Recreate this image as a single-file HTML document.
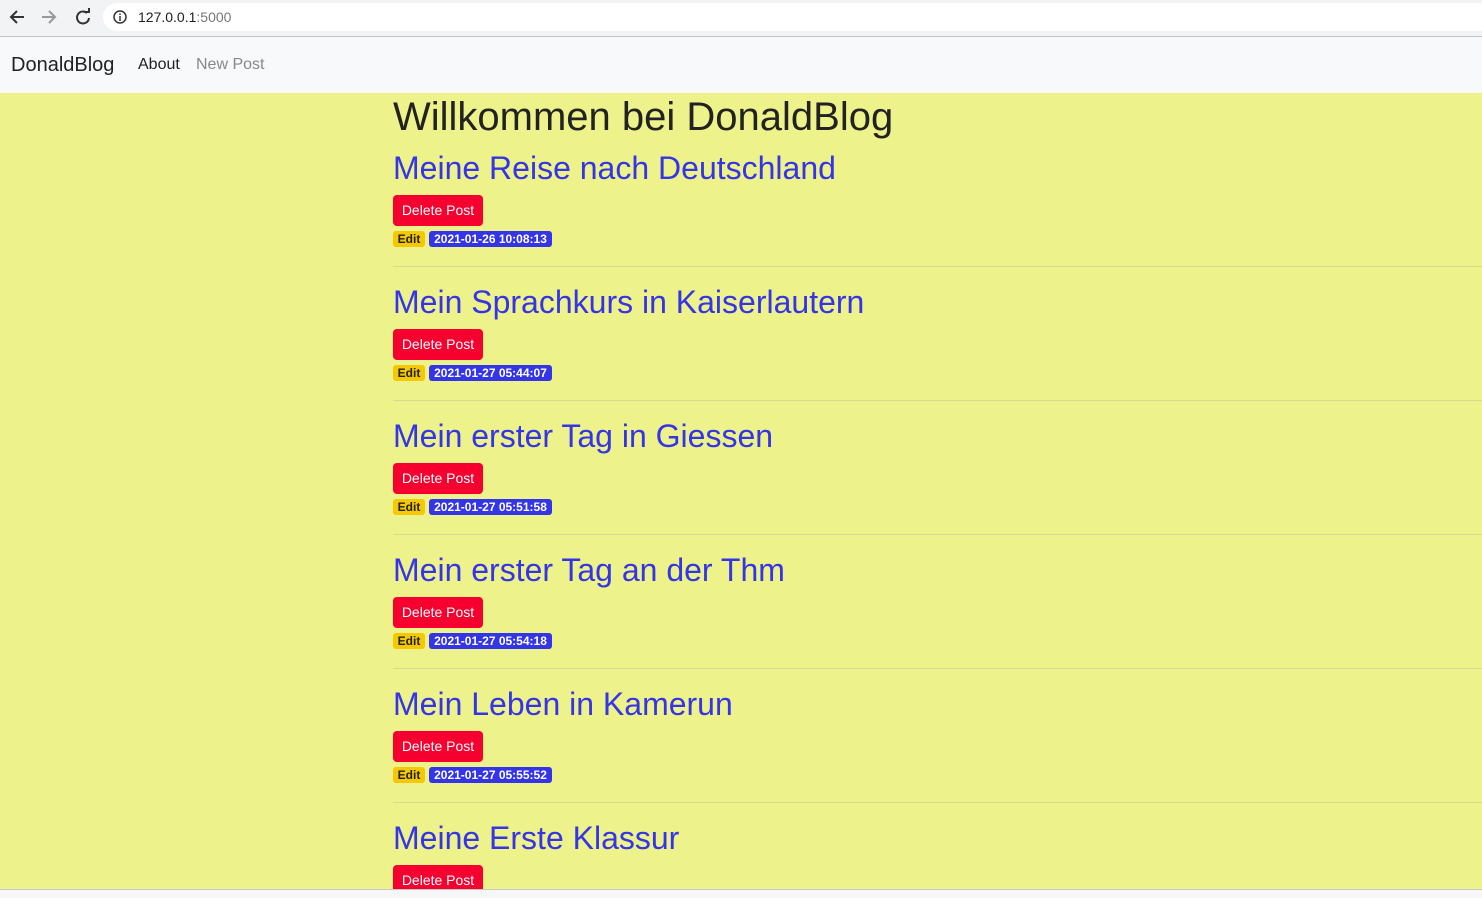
<!DOCTYPE html>
<html><head><style>
body{margin:0;width:1482px;height:897px;overflow:hidden;font-family:"Liberation Sans",sans-serif;background:#edf28a;position:relative}
.chrome{position:absolute;left:0;top:0;width:1482px;height:36px;background:#f1f3f4;border-bottom:1px solid #c4c4c4}
.url{position:absolute;left:103px;top:3px;width:1390px;height:28px;background:#fff;border-radius:14px}
.url span{position:absolute;left:35px;top:6px;font-size:14px;color:#202124}
.nav{position:absolute;left:0;top:37px;width:1482px;height:56px;background:#f8f9fa}
.a{position:absolute}
h1{position:absolute;left:393px;top:94px;margin:0;font-size:40px;font-weight:400;color:#222;line-height:46px}
.post{position:absolute;left:393px;width:1089px}
.t{position:absolute;top:-1px;font-size:32px;color:#3434e8;line-height:38px;white-space:nowrap}
.btn{position:absolute;top:45px;width:90px;height:31px;background:#f5002f;color:#fff;font-size:14px;border-radius:4px;text-align:center;line-height:30px}
.e{position:absolute;top:81px;left:0;width:32px;height:16px;background:#f5c800;color:#222;font-size:12px;font-weight:bold;text-align:center;line-height:16px;border-radius:3px}
.d{position:absolute;top:81px;left:36px;width:123px;height:16px;background:#3434e8;color:#fff;font-size:12px;font-weight:bold;text-align:center;line-height:16px;border-radius:3px}
.hr{position:absolute;top:116px;left:0;width:1089px;height:1px;background:#d6d99a}
.bot{position:absolute;left:0;top:889px;width:1482px;height:8px;background:#f7f7f7;border-top:1px solid #c8c8c8}
</style></head><body>
<div class="chrome">
<svg class="a" style="left:8px;top:8px" width="90" height="20" viewBox="0 0 90 20" fill="none" stroke-width="2"><path d="M16 9H3M9 3L3 9l6 6" stroke="#333"/><path d="M34 9h13M41 3l6 6-6 6" stroke="#999"/><path d="M79 5a6 6 0 1 0 2 5" stroke="#333"/><path d="M76 4h5v-4" stroke="#333"/></svg>
<div class="url"><svg class="a" style="left:10px;top:7px" width="14" height="14"><circle cx="7" cy="7" r="6" stroke="#333" stroke-width="1.5" fill="none"/><path d="M7 6v5M7 3.5v1.5" stroke="#333" stroke-width="1.5"/></svg><span>127.0.0.1<span style="position:static;color:#777">:5000</span></span></div>
</div>
<div class="nav">
<div class="a" style="left:11px;top:17px;font-size:20px;color:#222">DonaldBlog</div>
<div class="a" style="left:138px;top:19px;font-size:16px;color:#222">About</div>
<div class="a" style="left:196px;top:19px;font-size:16px;color:#888">New Post</div>
</div>
<h1>Willkommen bei DonaldBlog</h1>
<div class="post" style="top:150px"><div class="t">Meine Reise nach Deutschland</div><div class="btn">Delete Post</div><div class="e">Edit</div><div class="d">2021-01-26 10:08:13</div><div class="hr"></div></div>
<div class="post" style="top:284px"><div class="t">Mein Sprachkurs in Kaiserlautern</div><div class="btn">Delete Post</div><div class="e">Edit</div><div class="d">2021-01-27 05:44:07</div><div class="hr"></div></div>
<div class="post" style="top:418px"><div class="t">Mein erster Tag in Giessen</div><div class="btn">Delete Post</div><div class="e">Edit</div><div class="d">2021-01-27 05:51:58</div><div class="hr"></div></div>
<div class="post" style="top:552px"><div class="t">Mein erster Tag an der Thm</div><div class="btn">Delete Post</div><div class="e">Edit</div><div class="d">2021-01-27 05:54:18</div><div class="hr"></div></div>
<div class="post" style="top:686px"><div class="t">Mein Leben in Kamerun</div><div class="btn">Delete Post</div><div class="e">Edit</div><div class="d">2021-01-27 05:55:52</div><div class="hr"></div></div>
<div class="post" style="top:820px"><div class="t">Meine Erste Klassur</div><div class="btn">Delete Post</div></div>
<div class="bot"></div>
</body></html>
